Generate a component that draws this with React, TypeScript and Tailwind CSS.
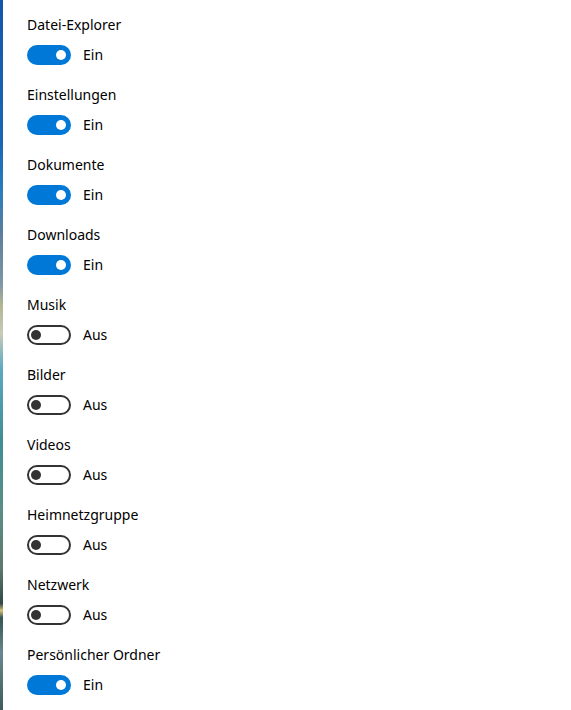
import React from 'react';

const items: [string, boolean][] = [
  ['Datei-Explorer', true],
  ['Einstellungen', true],
  ['Dokumente', true],
  ['Downloads', true],
  ['Musik', false],
  ['Bilder', false],
  ['Videos', false],
  ['Heimnetzgruppe', false],
  ['Netzwerk', false],
  ['Persönlicher Ordner', true],
];

const Toggle: React.FC<{ on: boolean }> = ({ on }) =>
  on ? (
    <span className="flex h-[20px] w-[44px] items-center justify-end rounded-full bg-[#0078d7] pr-[5px]">
      <span className="h-[10px] w-[10px] rounded-full bg-white" />
    </span>
  ) : (
    <span className="flex h-[20px] w-[44px] items-center justify-start rounded-full border-2 border-[#333333] pl-[2px]">
      <span className="h-[10px] w-[10px] rounded-full bg-[#333333]" />
    </span>
  );

const App: React.FC = () => {
  return (
    <div className="flex h-[710px] w-[571px] overflow-hidden bg-white font-['Noto_Sans',sans-serif] text-[14px] text-black">
      {/* wallpaper edge */}
      <div className="h-full w-[3px] shrink-0 bg-[linear-gradient(to_bottom,#1357ad_0%,#1a66b4_20%,#2a7dbd_27%,#5d7f9c_33%,#7d97a4_40%,#b3b592_43%,#c7cbb8_47%,#5aa9c1_52%,#3f8e95_62%,#5b8d86_72%,#5d796d_80%,#2f4a48_85%,#d7c27a_86%,#355653_87%,#6a8790_92%,#3e5a5c_100%)]" />

      <div className="flex flex-col pl-[24px] pt-[15px]">
        {items.map(([label, on]) => (
          <div key={label} className="mb-[20px] flex flex-col">
            <div className="h-[20px] leading-[20px]">{label}</div>
            <div className="mt-[10px] flex h-[20px] items-center gap-[12px]">
              <Toggle on={on} />
              <span className="leading-[20px]">{on ? 'Ein' : 'Aus'}</span>
            </div>
          </div>
        ))}
      </div>
    </div>
  );
};

export default App;
